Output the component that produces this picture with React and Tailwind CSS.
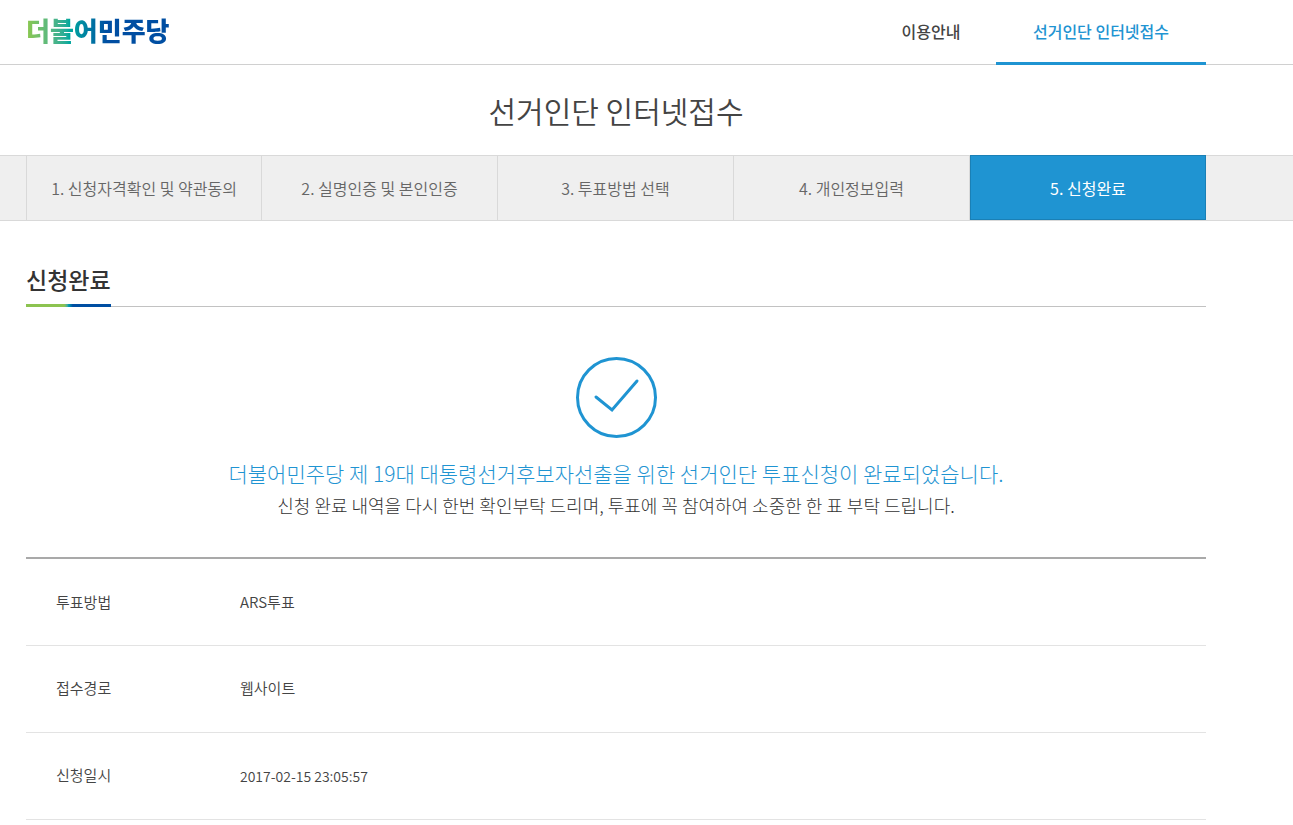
import React from 'react';

const steps = [
  '1. 신청자격확인 및 약관동의',
  '2. 실명인증 및 본인인증',
  '3. 투표방법 선택',
  '4. 개인정보입력',
  '5. 신청완료',
];

const currentStep = 4;

const rows = [
  { label: '투표방법', value: 'ARS투표' },
  { label: '접수경로', value: '웹사이트' },
  { label: '신청일시', value: '2017-02-15 23:05:57' },
];

const Logo = () => (
  <span className="block bg-linear-to-r from-[#8cc84b] via-[#00a99d] via-30% to-[#004ea2] to-56% bg-clip-text text-[26px] leading-10 font-black text-transparent">
    더불어민주당
  </span>
);

const Header = () => (
  <header className="h-[65px] border-b border-[#d0d0d0] pl-[26px] pr-[87px]">
    <div className="flex h-16 items-start justify-between">
      <a href="#" className="pt-[10px]">
        <Logo />
      </a>
      <nav className="flex text-base font-medium">
        <a
          href="#"
          className="flex h-[65px] w-[130px] items-center justify-center border-b-3 border-transparent text-[#444]"
        >
          이용안내
        </a>
        <a
          href="#"
          className="flex h-[65px] w-[210px] items-center justify-center border-b-3 border-[#1f94d2] text-[#1f94d2]"
        >
          선거인단 인터넷접수
        </a>
      </nav>
    </div>
  </header>
);

const StepBar = () => (
  <div className="border-y border-[#d9d9d9] bg-[#efefef] pl-[26px] pr-[87px]">
    <ol className="flex h-16 text-base">
      {steps.map((step, index) => (
        <li
          key={step}
          aria-current={index === currentStep ? 'step' : undefined}
          className={`flex w-1/5 items-center justify-center ${
            index === currentStep
              ? '-mt-px border border-[#1a80b6] bg-[#1f94d2] text-white'
              : 'border-r border-[#d9d9d9] font-[350] text-[#666] first:border-l'
          }`}
        >
          {step}
        </li>
      ))}
    </ol>
  </div>
);

const App = () => {
  return (
    <div className="min-h-screen bg-white font-['Noto_Sans_CJK_KR',sans-serif] text-[#333]">
      <Header />

      {/* Page title */}
      <div className="flex h-[90px] items-center justify-center pl-[26px] pr-[87px]">
        <h1 className="text-3xl font-[350] text-[#444]">선거인단 인터넷접수</h1>
      </div>

      <StepBar />

      <main className="pl-[26px] pr-[87px] pt-10">
        {/* Section heading */}
        <div className="flex h-[46px] items-stretch border-b border-[#c2c2c2]">
          <h2 className="relative flex items-center pb-2 text-[23px] font-medium text-[#333]">
            신청완료
            <span className="absolute -bottom-px left-0 h-[3px] w-full bg-linear-to-r from-[#8cc350] from-45% via-[#00a0b0] via-50% to-[#004ea2] to-55%" />
          </h2>
        </div>

        {/* Result message */}
        <div className="flex flex-col items-center pb-9 pt-[50px] text-center">
          <svg width="82" height="82" viewBox="0 0 82 82" fill="none" stroke="#1f94d2" strokeWidth="3">
            <circle cx="41.5" cy="40.5" r="39" />
            <path d="M21 40 L37 53 L62 24" strokeLinecap="round" />
          </svg>
          <p className="mt-[18px] text-[21px] leading-8 font-light text-[#1f94d2]">
            더불어민주당 제 19대 대통령선거후보자선출을 위한 선거인단 투표신청이 완료되었습니다.
          </p>
          <p className="text-lg leading-8 font-light">
            신청 완료 내역을 다시 한번 확인부탁 드리며, 투표에 꼭 참여하여 소중한 한 표 부탁 드립니다.
          </p>
        </div>

        {/* Application details */}
        <table className="w-full border-t-2 border-[#a9a9a9] text-left text-[15px] text-[#444]">
          <tbody>
            {rows.map((row) => (
              <tr key={row.label} className="h-[87px] border-b border-[#e3e3e3]">
                <th scope="row" className="w-[214px] pl-[30px] font-[350]">
                  {row.label}
                </th>
                <td className={/^\d/.test(row.value) ? 'text-sm font-[350]' : 'font-[350]'}>{row.value}</td>
              </tr>
            ))}
          </tbody>
        </table>
      </main>
    </div>
  );
};

export default App;
